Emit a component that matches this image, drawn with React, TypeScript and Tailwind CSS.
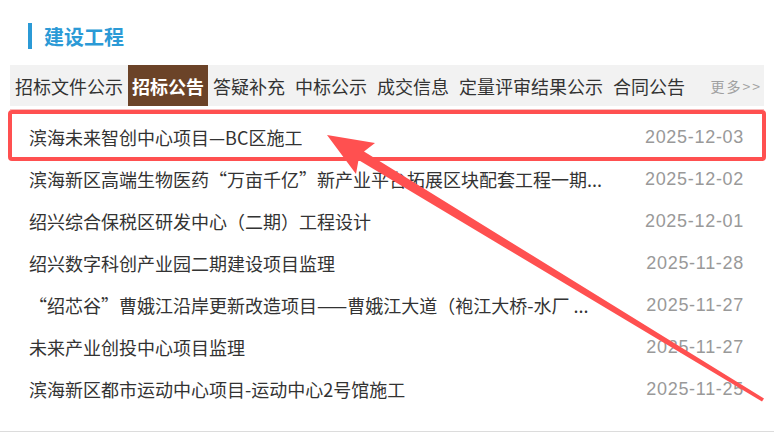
const tabs = ['招标文件公示', '招标公告', '答疑补充', '中标公示', '成交信息', '定量评审结果公示', '合同公告'];

const rows = [
  { title: '滨海未来智创中心项目—BC区施工', date: '2025-12-03' },
  { title: '滨海新区高端生物医药“万亩千亿”新产业平台拓展区块配套工程一期...', date: '2025-12-02' },
  { title: '绍兴综合保税区研发中心（二期）工程设计', date: '2025-12-01' },
  { title: '绍兴数字科创产业园二期建设项目监理', date: '2025-11-28' },
  { title: '“绍芯谷”曹娥江沿岸更新改造项目——曹娥江大道（袍江大桥-水厂 ...', date: '2025-11-27' },
  { title: '未来产业创投中心项目监理', date: '2025-11-27' },
  { title: '滨海新区都市运动中心项目-运动中心2号馆施工', date: '2025-11-25' },
];

export default function App() {
  const active = 1;

  return (
    <div className="relative w-[774px] h-[432px] overflow-hidden bg-white font-['Noto_Sans_CJK_SC',sans-serif] text-[#333]">
      {/* Section title */}
      <div className="flex items-center pt-[22px] pl-[28px]">
        <div className="w-[4px] h-[26px] bg-[#2b9ad6]"></div>
        <h2 className="ml-[12px] mt-[2px] text-[20px] leading-[26px] font-bold text-[#2b9ad6]">建设工程</h2>
      </div>

      {/* Tabs */}
      <div className="mt-[15px] mx-[10px] h-[41px] bg-[#f2f2f2] flex items-stretch">
        {tabs.map((t, i) => (
          <div
            key={t}
            className={
              i === active
                ? 'px-[4px] flex items-center bg-[#6b4328] text-white font-bold text-[18px] leading-none'
                : 'px-[5px] flex items-center text-[18px] leading-none'
            }
          >
            {t}
          </div>
        ))}
        <div className="ml-auto pr-[2px] flex items-center text-[14px] tracking-[2px] text-[#a0a0a0] leading-none">更多&gt;&gt;</div>
      </div>
      <div className="mt-[3px] mx-[10px] h-px bg-[#f6bcbc]"></div>

      {/* List */}
      <ul className="mt-[6px]">
        {rows.map((r, i) => (
          <li key={i} className="h-[42px] flex items-center justify-between pl-[29px] pr-[30px]">
            <span className="max-w-[580px] overflow-hidden whitespace-nowrap text-[18px] leading-[24px]">{r.title}</span>
            <span className="font-['Liberation_Sans',sans-serif] text-[18px] tracking-[0.7px] leading-[24px] text-[#999]">{r.date}</span>
          </li>
        ))}
      </ul>
      <div className="mt-[21px] h-[2px] bg-[#dcdcdc]"></div>

      {/* Annotation box */}
      <div className="absolute left-[8px] top-[110px] w-[758px] h-[51px] border-[4px] border-[#ff5050] rounded-[4px]"></div>

      {/* Annotation arrow */}
      <svg className="absolute left-0 top-0 pointer-events-none" width="774" height="432" viewBox="0 0 774 432">
        <polygon
          fill="#ff5050"
          points="327,135 375,143 364,151.5 764,398.5 762,401.5 358.5,160 356,174"
        />
      </svg>
    </div>
  );
}
